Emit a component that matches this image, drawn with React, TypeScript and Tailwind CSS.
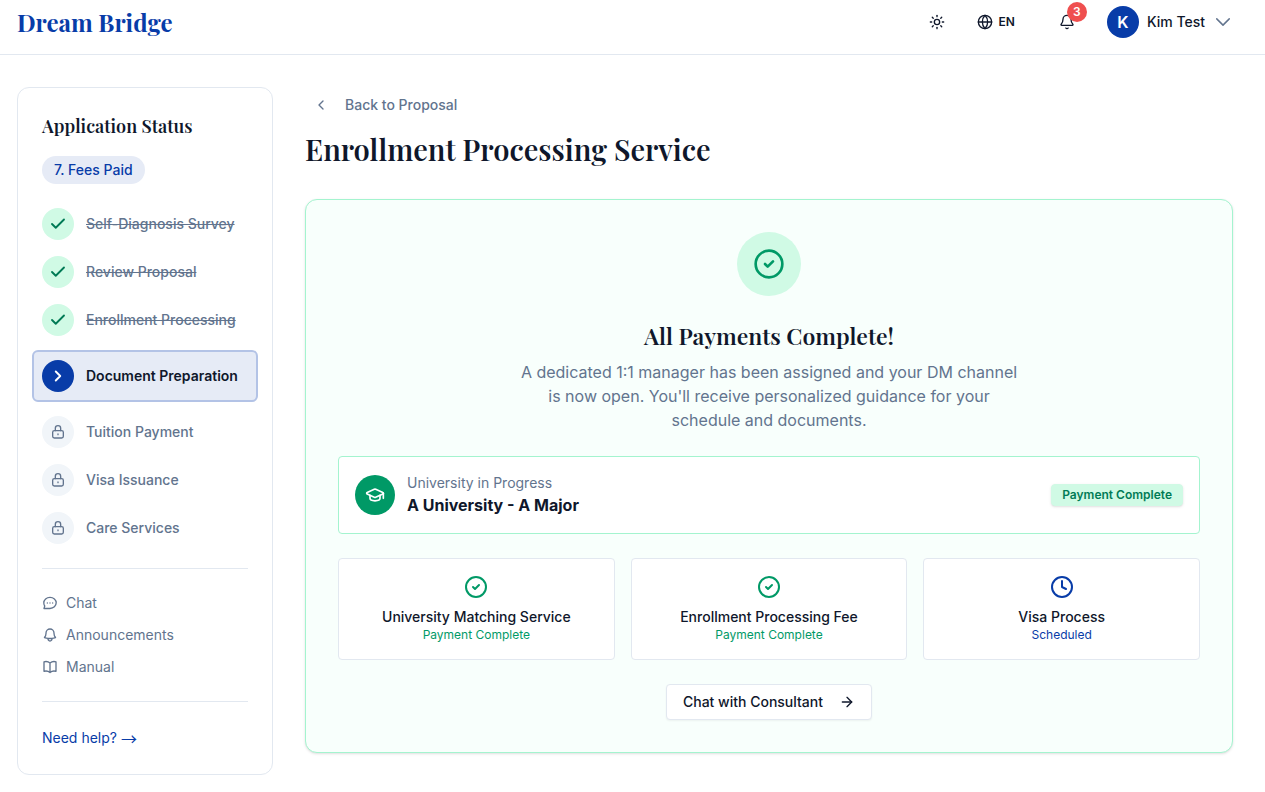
import {
  ArrowRight,
  Bell,
  Check,
  ChevronLeft,
  ChevronRight,
  CircleCheck,
  Clock,
  Globe,
  GraduationCap,
  Sun,
} from "lucide-react";
import { HiOutlineBell, HiOutlineBookOpen, HiOutlineChevronDown } from "react-icons/hi2";

const steps = [
  { label: "Self-Diagnosis Survey", status: "done" },
  { label: "Review Proposal", status: "done" },
  { label: "Enrollment Processing", status: "done" },
  { label: "Document Preparation", status: "current" },
  { label: "Tuition Payment", status: "locked" },
  { label: "Visa Issuance", status: "locked" },
  { label: "Care Services", status: "locked" },
];

const links = [
  { icon: ChatIcon, label: "Chat" },
  { icon: HiOutlineBell, label: "Announcements" },
  { icon: HiOutlineBookOpen, label: "Manual" },
];

const services = [
  { title: "University Matching Service", note: "Payment Complete", paid: true },
  { title: "Enrollment Processing Fee", note: "Payment Complete", paid: true },
  { title: "Visa Process", note: "Scheduled", paid: false },
];

function ChatIcon({ className }: { className?: string }) {
  return (
    <svg
      viewBox="0 0 24 24"
      fill="none"
      stroke="currentColor"
      strokeLinecap="round"
      strokeLinejoin="round"
      className={className}
    >
      <path d="M12 3.500c5.200 0 9.300 3.700 9.300 8.300s-4.100 8.400-9.300 8.400H3l1.100-3.700a7.900 7.900 0 0 1-1.400-4.700C2.700 7.200 6.800 3.500 12 3.500z" />
      <path d="M8 12h.01M12 12h.01M16 12h.01" />
    </svg>
  );
}

function LockIcon({ className }: { className?: string }) {
  return (
    <svg
      viewBox="0 0 24 24"
      fill="none"
      stroke="currentColor"
      strokeLinecap="round"
      strokeLinejoin="round"
      className={className}
    >
      <rect x="4" y="10" width="16" height="11" rx="2.5" />
      <path d="M8 10V6.500a4 4 0 0 1 8 0V10M12 15v1" />
    </svg>
  );
}

function Header() {
  return (
    <header className="border-b border-slate-200 pb-2.5 pl-[17px] pr-8">
      <div className="flex h-11 items-center justify-between">
        <a
          href="#"
          className="font-['Playfair_Display','Liberation_Serif',serif] text-2xl font-bold text-[#083ca8]"
        >
          Dream Bridge
        </a>
        <div className="flex items-center">
          <button type="button" aria-label="Toggle theme" className="mr-8">
            <Sun className="h-4 w-4" />
          </button>
          <button
            type="button"
            className="mr-11 flex items-center gap-1.5 text-xs font-semibold"
          >
            <Globe className="h-4 w-4" />
            EN
          </button>
          <button type="button" aria-label="Notifications" className="relative mr-8">
            <Bell className="h-4 w-4" />
            <span className="absolute -top-3 left-2 flex h-5 w-5 items-center justify-center rounded-full bg-[#ef4f4f] text-xs font-semibold text-white">
              3
            </span>
          </button>
          <button type="button" className="flex items-center gap-2 text-sm font-medium">
            <span className="flex h-8 w-8 items-center justify-center rounded-full bg-[#083ca8] text-base font-semibold text-white">
              K
            </span>
            Kim Test
            <HiOutlineChevronDown className="h-5 w-5 stroke-[1.75] text-slate-500" />
          </button>
        </div>
      </div>
    </header>
  );
}

function Step({ label, status }: { label: string; status: string }) {
  if (status === "current") {
    return (
      <li
        aria-current="step"
        className="-mx-2.5 -my-0.5 flex items-center gap-3 rounded-md border-2 border-[#b3c3e6] bg-[#e6ebf6] p-2"
      >
        <span className="flex h-8 w-8 items-center justify-center rounded-full bg-[#083ca8] text-white">
          <ChevronRight className="h-[18px] w-[18px]" strokeWidth={2.5} />
        </span>
        <span className="text-sm font-semibold">{label}</span>
      </li>
    );
  }

  if (status === "done") {
    return (
      <li className="flex items-center gap-3">
        <span className="flex h-8 w-8 items-center justify-center rounded-full bg-emerald-100 text-emerald-700">
          <Check className="h-[18px] w-[18px]" strokeWidth={2.5} />
        </span>
        <span className="text-sm font-medium text-slate-500 line-through">{label}</span>
      </li>
    );
  }

  return (
    <li className="flex items-center gap-3">
      <span className="flex h-8 w-8 items-center justify-center rounded-full bg-slate-100 text-slate-500">
        <LockIcon className="h-4 w-4 stroke-2" />
      </span>
      <span className="text-sm font-medium text-slate-500">{label}</span>
    </li>
  );
}

function Sidebar() {
  return (
    <aside className="w-64 shrink-0 rounded-xl border border-slate-200 p-6">
      <h2 className="mb-4 font-['Playfair_Display','Liberation_Serif',serif] text-lg font-semibold">
        Application Status
      </h2>
      <span className="mb-6 inline-flex rounded-full bg-[#e6ebf6] px-3 py-1 text-sm font-medium text-[#083ca8]">
        7. Fees Paid
      </span>
      <ol className="flex flex-col gap-4">
        {steps.map((step) => (
          <Step key={step.label} label={step.label} status={step.status} />
        ))}
      </ol>
      <nav className="my-6 flex flex-col gap-3 border-y border-slate-200 py-6">
        {links.map(({ icon: Icon, label }) => (
          <a key={label} href="#" className="flex items-center gap-2 text-sm text-slate-500">
            <Icon className="h-4 w-4 stroke-2" />
            {label}
          </a>
        ))}
      </nav>
      <a href="#" className="flex items-center gap-1 text-sm leading-6 text-[#083ca8]">
        Need help?
        <span className="font-['Noto_Sans_CJK_KR',sans-serif] text-base">→</span>
      </a>
    </aside>
  );
}

function PaymentCard() {
  return (
    <section className="flex flex-col items-center rounded-xl border border-emerald-200 bg-[#f8fffc] p-8 shadow-sm">
      <div className="mb-6 flex h-16 w-16 items-center justify-center rounded-full bg-emerald-100">
        <CircleCheck className="h-8 w-8 text-emerald-600" />
      </div>
      <h2 className="mb-2 font-['Playfair_Display','Liberation_Serif',serif] text-[23px] leading-8 font-semibold">
        All Payments Complete!
      </h2>
      <p className="mb-6 max-w-lg text-center text-base text-slate-500">
        A dedicated 1:1 manager has been assigned and your DM channel is now open. You'll
        receive personalized guidance for your schedule and documents.
      </p>

      <div className="mb-6 flex w-full items-center gap-3 rounded border border-emerald-200 bg-white p-4">
        <span className="flex h-10 w-10 items-center justify-center rounded-full bg-emerald-600 text-white">
          <GraduationCap className="h-5 w-5" />
        </span>
        <div className="flex-1">
          <p className="text-sm text-slate-500">University in Progress</p>
          <p className="text-base font-bold">A University - A Major</p>
        </div>
        <span className="rounded-sm border border-emerald-100 bg-emerald-100 px-2.5 py-0.5 text-xs font-semibold text-emerald-700 shadow-sm">
          Payment Complete
        </span>
      </div>

      <div className="mb-6 grid w-full grid-cols-3 gap-4">
        {services.map(({ title, note, paid }) => (
          <div
            key={title}
            className="flex flex-col items-center rounded border border-slate-200 bg-white p-4"
          >
            {paid ? (
              <CircleCheck className="mb-2 h-6 w-6 text-emerald-600" />
            ) : (
              <Clock className="mb-2 h-6 w-6 text-[#083ca8]" />
            )}
            <h3 className="text-sm font-medium">{title}</h3>
            <p className={paid ? "text-xs text-emerald-600" : "text-xs text-[#083ca8]"}>
              {note}
            </p>
          </div>
        ))}
      </div>

      <button
        type="button"
        className="flex h-9 items-center gap-4 rounded-sm border border-slate-200 bg-white px-4 text-sm font-medium shadow-xs"
      >
        Chat with Consultant
        <ArrowRight className="h-4 w-4" />
      </button>
    </section>
  );
}

export default function App() {
  return (
    <div className="min-h-screen bg-white font-['Inter',sans-serif] text-slate-900">
      <Header />
      <div className="flex items-start gap-8 pt-8 pr-8 pb-4 pl-[17px]">
        <Sidebar />
        <main className="min-w-0 flex-1">
          <button
            type="button"
            className="mb-2 flex h-9 items-center gap-4 px-2 text-sm font-medium text-slate-500"
          >
            <ChevronLeft className="h-4 w-4" />
            Back to Proposal
          </button>
          <h1 className="mb-8 font-['Playfair_Display','Liberation_Serif',serif] text-[29px] leading-9 font-semibold">
            Enrollment Processing Service
          </h1>
          <PaymentCard />
        </main>
      </div>
    </div>
  );
}
